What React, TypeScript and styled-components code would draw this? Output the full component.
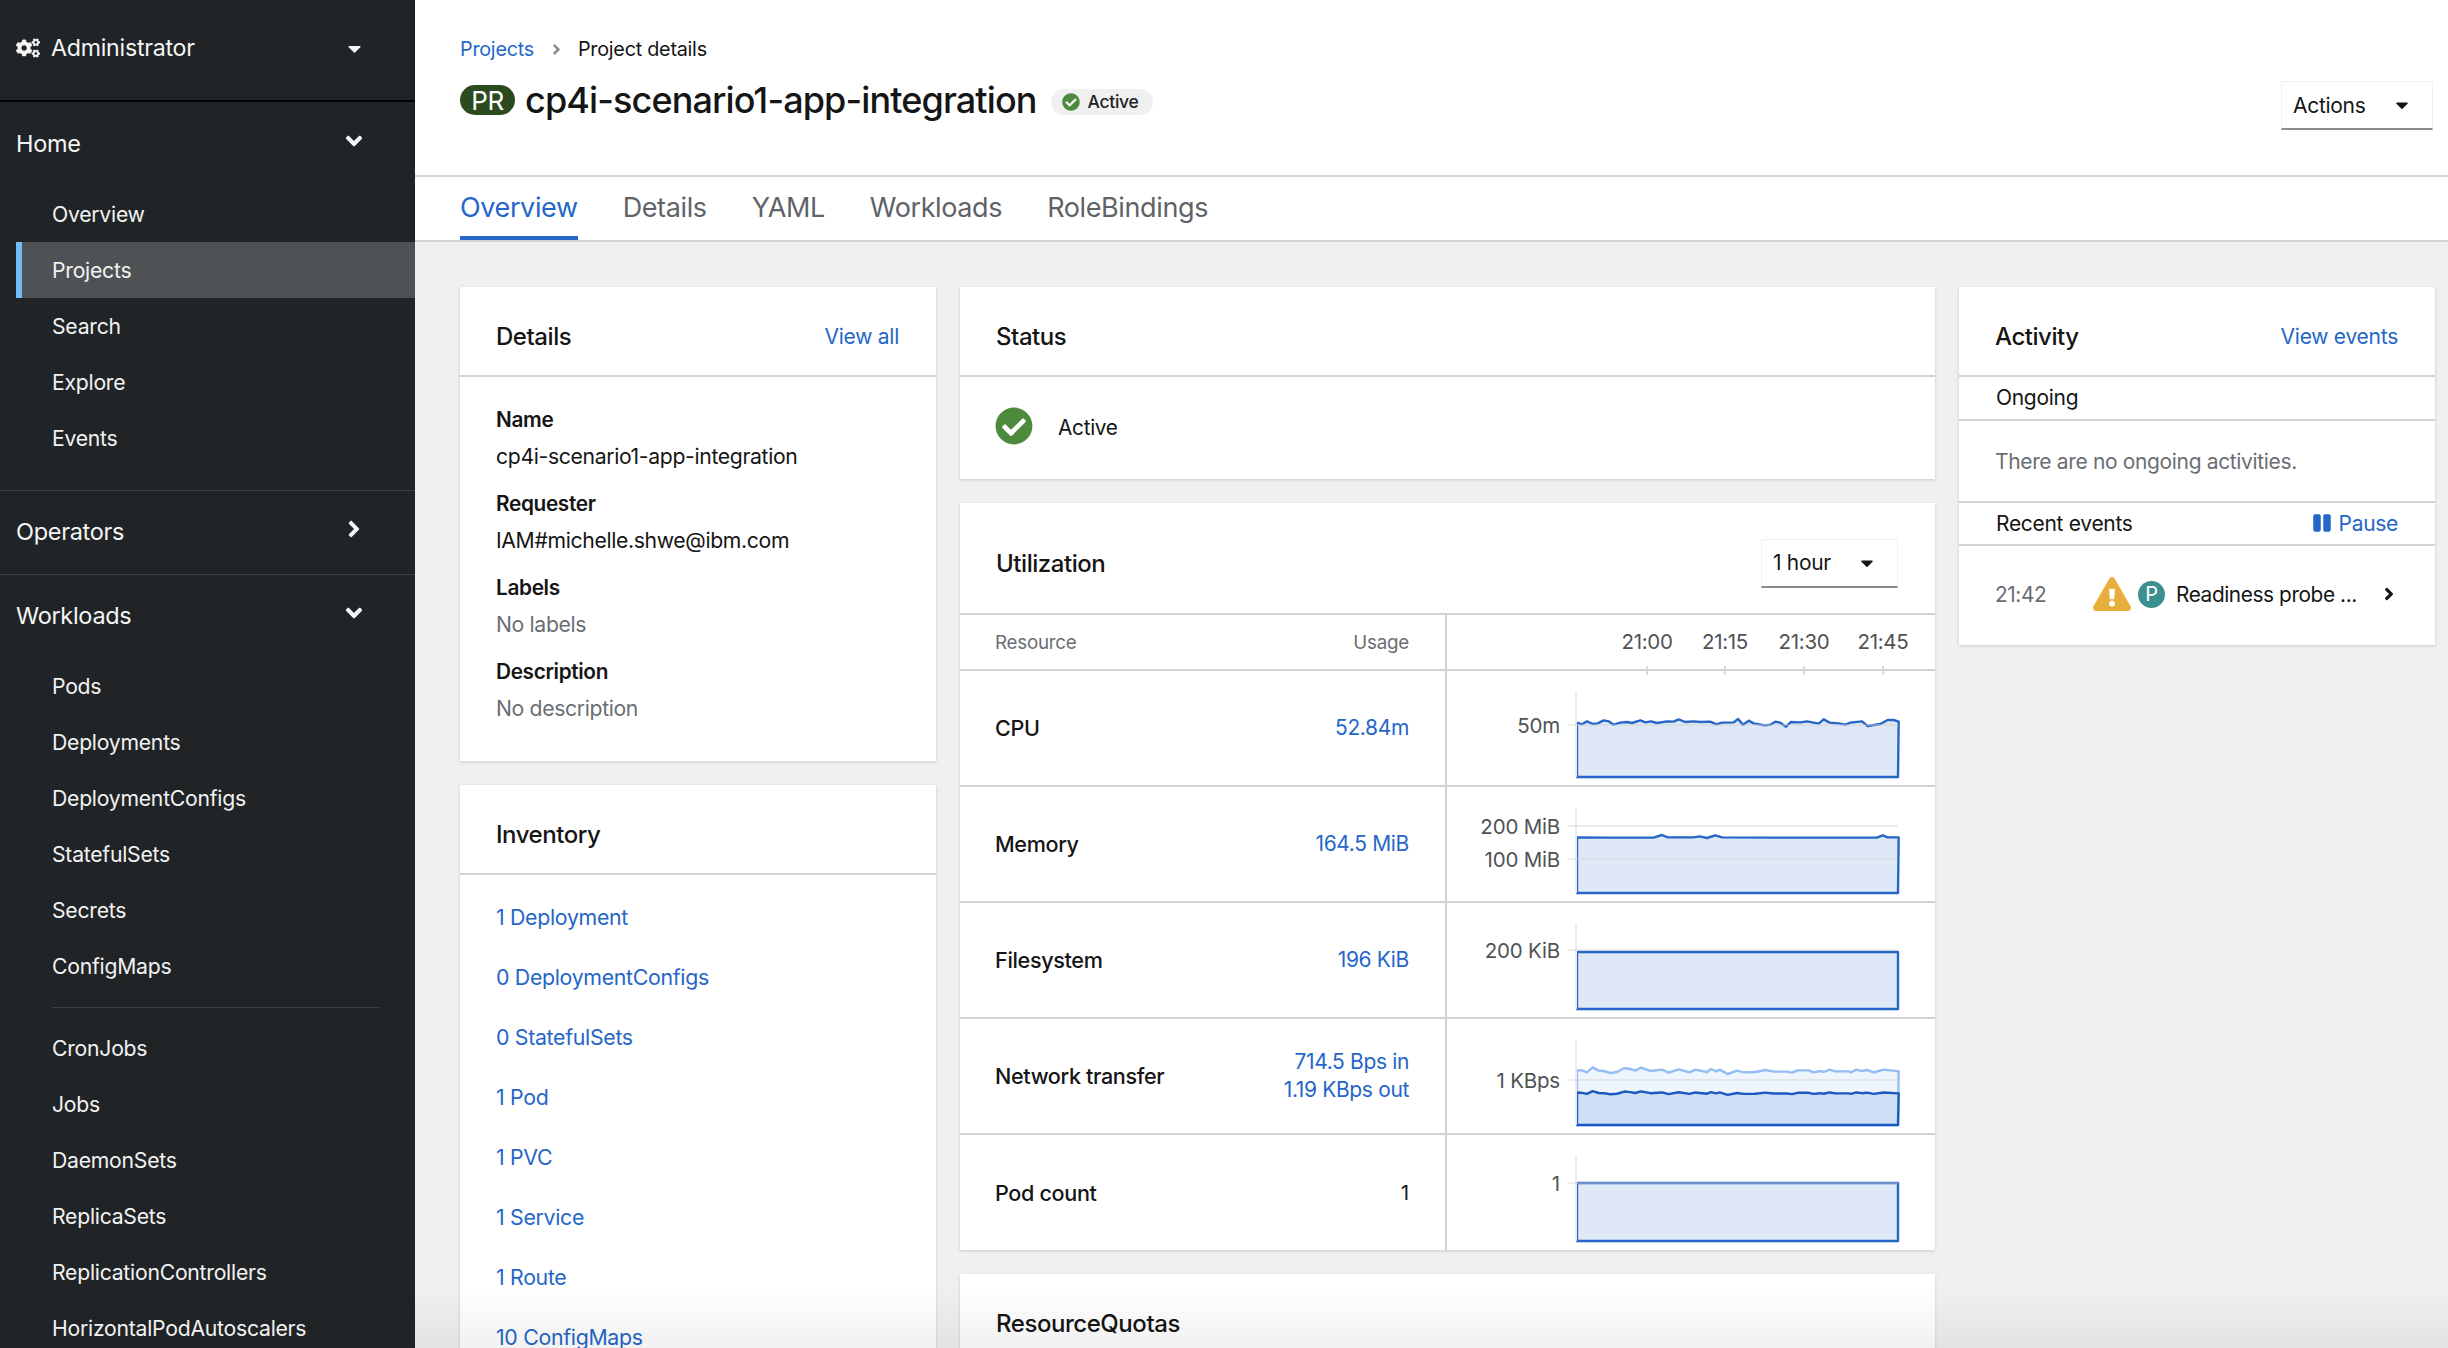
import React from 'react';
import styled, { createGlobalStyle } from 'styled-components';
import { FaAngleDown, FaAngleRight, FaCaretDown, FaCheckCircle, FaCogs, FaExclamationTriangle, FaPause } from 'react-icons/fa';

const Global = createGlobalStyle`
  html, body { margin: 0; padding: 0; height: 100%; overflow: hidden; background: #f0f0f0; }
  body { font-family: "Inter", "Liberation Sans", sans-serif; font-size: 21px; color: #151515; }
  * { box-sizing: border-box; }
`;

const Page = styled.div`display: flex; width: 2448px; height: 1348px; overflow: hidden;`;
const Sidebar = styled.nav`width: 415px; flex: none; height: 1348px; overflow: hidden; background: #212427; color: #fff;`;
const Perspective = styled.div`
  height: 102px; border-bottom: 2px solid #030303; display: flex; align-items: center; padding: 0 50px 4px 16px;
  font-size: 23.2px; letter-spacing: -0.25px; color: #f5f5f5;
  svg { flex: none; }
  span { margin-left: 11px; flex: 1; }
`;
const Section = styled.div<{ $pt: number; $pb: number; $line?: boolean }>`
  padding: ${p => p.$pt}px 0 ${p => p.$pb}px;
  border-bottom: ${p => (p.$line ? '1px solid #3f4245' : 'none')};
`;
const SectionHead = styled.div`
  height: 56px; display: flex; align-items: center; justify-content: space-between; padding: 0 48px 0 16px;
  font-size: 23.5px; letter-spacing: -0.3px; color: #f5f5f5;
  svg { margin-bottom: 5px; }
`;
const SubList = styled.div<{ $mt: number }>`margin-top: ${p => p.$mt}px;`;
const SubItem = styled.div<{ $active?: boolean }>`
  height: 56px; display: flex; align-items: center; margin-left: 16px; padding-left: ${p => (p.$active ? '30px' : '36px')};
  font-size: 21.2px; letter-spacing: -0.25px; color: #f2f2f2;
  background: ${p => (p.$active ? '#4f5255' : 'transparent')};
  border-left: ${p => (p.$active ? '6px solid #73bcf7' : 'none')};
`;
const NavRule = styled.div`height: 1px; background: #3f4245; margin: 13px 36px 12px 52px;`;

const Main = styled.main`flex: 1; min-width: 0; height: 1348px; overflow: hidden; position: relative; background: #f0f0f0;`;
const Header = styled.header`
  height: 177px; background: #fff; border-bottom: 2px solid #d2d2d2; display: flex; justify-content: space-between;
  padding: 0 15px 0 45px;
`;
const Crumbs = styled.div`
  display: flex; align-items: center; height: 28px; margin-top: 35px; font-size: 19.8px; letter-spacing: -0.25px;
  svg { margin: 0 13px 0 14px; color: #8a8d90; }
`;
const Link = styled.a`color: #2566c8; text-decoration: none;`;
const TitleRow = styled.div`display: flex; align-items: center; margin-top: 15px; height: 44px;`;
const Badge = styled.span`
  width: 55px; height: 30px; border-radius: 15px; background: #2c4a20; color: #fff; font-size: 26px; font-weight: 400;
  display: flex; align-items: center; justify-content: center; letter-spacing: -0.4px;
`;
const Title = styled.h1`margin: 0 0 0 10px; font-size: 36px; font-weight: 500; letter-spacing: -0.88px; line-height: 44px; white-space: nowrap;`;
const Pill = styled.span`
  margin: 3px 0 0 14px; width: 102px; height: 26px; border-radius: 13px; background: #f0f0f0; display: flex; align-items: center;
  padding-left: 11px; gap: 8px; font-size: 17.5px; font-weight: 500; letter-spacing: -0.3px; color: #222;
  svg { color: #4c8a3d; }
`;
const Select = styled.div<{ $w: number }>`
  width: ${p => p.$w}px; height: 49px; display: flex; align-items: center; justify-content: space-between; padding: 0 20px 0 11px;
  background: #fff; border: 1px solid #f0f0f0; border-bottom: 2px solid #8a8d90; font-size: 21px; letter-spacing: -0.3px;
`;
const ActionsWrap = styled.div`margin-top: 81px;`;

const Tabs = styled.div`height: 65px; background: #fff; border-bottom: 2px solid #d2d2d2; display: flex; gap: 45px; padding-left: 45px;`;
const Tab = styled.div<{ $active?: boolean }>`
  height: 63px; display: flex; align-items: center; padding-top: 2px; font-size: 27px; letter-spacing: -0.38px;
  color: ${p => (p.$active ? '#2566c8' : '#5f6368')};
  border-bottom: ${p => (p.$active ? '4px solid #2566c8' : '4px solid transparent')};
`;
const Grid = styled.div`
  display: grid; grid-template-columns: 476px 975px 476px; gap: 24px; padding: 45px 13px 0 45px; align-items: start;
`;
const Column = styled.div`display: flex; flex-direction: column; gap: 24px;`;
const Card = styled.section`background: #fff; box-shadow: 0 1px 3px rgba(0, 0, 0, 0.16);`;
const CardHead = styled.div<{ $h?: number }>`
  height: ${p => (p.$h ?? 90)}px; border-bottom: 2px solid #d2d2d2; display: flex; align-items: center; justify-content: space-between;
  padding: 10px 37px 0 36px;
`;
const CardTitle = styled.h2`margin: 0; font-size: 24px; font-weight: 500; letter-spacing: -0.45px;`;
const CardLink = styled(Link)`font-size: 21px; letter-spacing: -0.25px;`;

const Dl = styled.dl`margin: 0; padding: 25px 36px 35px;`;
const Dt = styled.dt`height: 36px; line-height: 36px; font-size: 20.8px; font-weight: 600; letter-spacing: -0.35px;`;
const Dd = styled.dd<{ $muted?: boolean }>`
  margin: 0 0 12px; height: 36px; line-height: 36px; font-size: 21.2px; letter-spacing: -0.35px;
  color: ${p => (p.$muted ? '#6a6e73' : '#151515')};
  &:last-child { margin-bottom: 0; }
`;
const InvList = styled.div`padding: 12px 36px 0;`;
const InvItem = styled(Link)`display: flex; align-items: center; height: 60px; font-size: 21.3px; letter-spacing: -0.3px;`;

const StatusBody = styled.div`
  height: 102px; padding: 0 35px 2px; display: flex; align-items: center; gap: 25px; font-size: 20.8px; letter-spacing: -0.3px;
  svg { color: #4c8a3d; flex: none; margin-bottom: 2px; }
`;
const UtilRow = styled.div<{ $h: number; $last?: boolean }>`
  display: grid; grid-template-columns: 487px 1fr; height: ${p => p.$h}px;
  border-bottom: ${p => (p.$last ? 'none' : '2px solid #d2d2d2')};
`;
const ResCell = styled.div`
  border-right: 2px solid #d2d2d2; padding: 0 36px 0 35px; display: flex; align-items: center; justify-content: space-between;
`;
const HeadText = styled.span`font-size: 18.8px; letter-spacing: -0.25px; color: #6a6e73;`;
const ResName = styled.span`font-size: 21.6px; font-weight: 500; letter-spacing: -0.35px;`;
const ResValue = styled(Link)`font-size: 21px; letter-spacing: -0.35px; text-align: right; line-height: 28px;`;
const PlainValue = styled.span`font-size: 20.5px;`;
const ChartSvg = styled.svg`display: block; overflow: visible; width: 488px;`;

const SubHead = styled.div<{ $h: number }>`
  height: ${p => p.$h}px; border-bottom: 2px solid #d2d2d2; display: flex; align-items: center; justify-content: space-between;
  padding: 0 37px 1px; font-size: 21px; letter-spacing: -0.3px;
`;
const Empty = styled.div`height: 82px; border-bottom: 2px solid #d2d2d2; padding: 0 36px; display: flex; align-items: center; font-size: 21px; letter-spacing: -0.35px; color: #6a6e73;`;
const PauseLink = styled(Link)`display: flex; align-items: center; gap: 7px;`;
const EventRow = styled.div`height: 99px; display: flex; align-items: center; padding: 0 0 3px 36px; font-size: 20.8px; letter-spacing: -0.4px;`;
const EventTime = styled.span`width: 98px; color: #6a6e73;`;
const Warn = styled.span`color: #e8ae3c; display: flex;`;
const PBadge = styled.span`
  width: 27px; height: 27px; border-radius: 50%; background: #3d9090; color: #fff; font-size: 20px; margin: 0 11px 0 7px;
  display: flex; align-items: center; justify-content: center;
`;
const EventText = styled.span`width: 203px; white-space: nowrap;`;
const Fade = styled.div`
  position: absolute; left: 0; right: 0; bottom: 0; height: 62px; pointer-events: none;
  background: linear-gradient(to bottom, rgba(0, 0, 0, 0), rgba(0, 0, 0, 0.055));
`;

type Pt = [number, number];
const BLUE = '#2566c8';
const conv = (pts: Pt[], base: number, top: number): string =>
  pts.map(([x, y]) => `${(x - 410) / 3 + 130},${y / 3 + base - top}`).join(' ');
const area = (line: string, bottom: number) => `130,${bottom} ${line} 451,${bottom}`;

const cpu: Pt[] = [[410,308],[425,313],[440,304],[458,312],[472,310],[490,301],[505,304],[520,314],[540,308],[560,306],[575,309],[600,301],[615,307],[632,304],[650,309],[680,304],[700,305],[715,298],[735,306],[760,304],[780,306],[810,305],[828,313],[845,308],[880,307],[893,297],[908,314],[925,302],[940,310],[975,316],[990,314],[1005,305],[1020,308],[1037,320],[1052,306],[1080,307],[1100,304],[1135,311],[1150,298],[1168,308],[1195,310],[1215,314],[1230,308],[1265,304],[1282,318],[1320,312],[1342,300],[1360,300],[1375,305]];
const mem: Pt[] = [[410,652],[500,653],[640,653],[665,645],[682,652],[760,652],[778,649],[800,654],[825,646],[845,652],[1000,653],[1310,653],[1327,646],[1342,652],[1375,652]];
const netLight: Pt[] = [[410,511],[425,511],[440,517],[457,502],[475,512],[490,513],[510,519],[530,516],[552,504],[570,507],[585,512],[602,503],[630,513],[665,509],[685,518],[715,508],[748,517],[765,509],[800,516],[812,507],[828,514],[838,509],[862,522],[890,512],[910,517],[945,516],[975,510],[1000,515],[1040,515],[1055,518],[1072,511],[1105,511],[1120,517],[1140,513],[1150,516],[1168,509],[1185,514],[1225,514],[1232,517],[1248,509],[1265,513],[1280,510],[1300,517],[1330,509],[1375,514]];
const netDark: Pt[] = netLight.map(([x, y]) => [x, 579 + (y - 512) * 0.55]);

const Axis: React.FC<{ ticks: { y: number; label: string }[] }> = ({ ticks }) => (
  <>
    <line x1={129} x2={129} y1={21} y2={106} stroke="#ececec" strokeWidth={2} />
    {ticks.map(t => (
      <g key={t.label}>
        <line x1={121} x2={451} y1={t.y} y2={t.y} stroke="#d2d2d2" strokeOpacity={0.55} strokeWidth={1.5} />
        <text x={113} y={t.y + 8} textAnchor="end" fontSize={20.5} letterSpacing={-0.2} fill="#4f5255" fontFamily="Inter, sans-serif">{t.label}</text>
      </g>
    ))}
  </>
);

const Chart: React.FC<{ ticks: { y: number; label: string }[]; children: React.ReactNode }> = ({ ticks, children }) => (
  <ChartSvg height={114} viewBox="0 0 488 114">
    {children}
    <Axis ticks={ticks} />
  </ChartSvg>
);
const Area: React.FC<{ points: string; fill: string; stroke: string }> = ({ points, fill, stroke }) => (
  <polygon points={points} fill={fill} stroke={stroke} strokeWidth={2.4} strokeLinejoin="round" />
);

const cpuLine = conv(cpu, 620, 671);
const memLine = conv(mem, 620, 787);
const lightLine = conv(netLight, 900, 1019);
const darkLine = conv(netDark, 900, 1019);

const workloadsA = ['Pods', 'Deployments', 'DeploymentConfigs', 'StatefulSets', 'Secrets', 'ConfigMaps'];
const workloadsB = ['CronJobs', 'Jobs', 'DaemonSets', 'ReplicaSets', 'ReplicationControllers', 'HorizontalPodAutoscalers'];
const inventory = ['1 Deployment', '0 DeploymentConfigs', '0 StatefulSets', '1 Pod', '1 PVC', '1 Service', '1 Route', '10 ConfigMaps'];
const times: [number, string][] = [[200, '21:00'], [278, '21:15'], [357, '21:30'], [436, '21:45']];

export default function App() {
  return (
    <Page>
      <Global />
      <Sidebar>
        <Perspective>
          <FaCogs size={24} />
          <span>Administrator</span>
          <FaCaretDown size={21} />
        </Perspective>
        <Section $pt={13} $pb={24} $line>
          <SectionHead>Home<FaAngleDown size={26} /></SectionHead>
          <SubList $mt={15}>
            <SubItem>Overview</SubItem>
            <SubItem $active>Projects</SubItem>
            <SubItem>Search</SubItem>
            <SubItem>Explore</SubItem>
            <SubItem>Events</SubItem>
          </SubList>
        </Section>
        <Section $pt={12} $pb={15} $line>
          <SectionHead>Operators<FaAngleRight size={26} /></SectionHead>
        </Section>
        <Section $pt={12} $pb={0}>
          <SectionHead>Workloads<FaAngleDown size={26} /></SectionHead>
          <SubList $mt={15}>
            {workloadsA.map(n => <SubItem key={n}>{n}</SubItem>)}
            <NavRule />
            {workloadsB.map(n => <SubItem key={n}>{n}</SubItem>)}
          </SubList>
        </Section>
      </Sidebar>
      <Main>
        <Header>
          <div>
            <Crumbs><Link>Projects</Link><FaAngleRight size={17} />Project details</Crumbs>
            <TitleRow>
              <Badge>PR</Badge>
              <Title>cp4i-scenario1-app-integration</Title>
              <Pill><FaCheckCircle size={18} />Active</Pill>
            </TitleRow>
          </div>
          <ActionsWrap>
            <Select $w={152}>Actions<FaCaretDown size={20} /></Select>
          </ActionsWrap>
        </Header>
        <Tabs>
          <Tab $active>Overview</Tab>
          <Tab>Details</Tab>
          <Tab>YAML</Tab>
          <Tab>Workloads</Tab>
          <Tab>RoleBindings</Tab>
        </Tabs>
        <Grid>
          <Column>
            <Card>
              <CardHead><CardTitle>Details</CardTitle><CardLink>View all</CardLink></CardHead>
              <Dl>
                <Dt>Name</Dt><Dd>cp4i-scenario1-app-integration</Dd>
                <Dt>Requester</Dt><Dd>IAM#michelle.shwe@ibm.com</Dd>
                <Dt>Labels</Dt><Dd $muted>No labels</Dd>
                <Dt>Description</Dt><Dd $muted>No description</Dd>
              </Dl>
            </Card>
            <Card>
              <CardHead><CardTitle>Inventory</CardTitle></CardHead>
              <InvList>
                {inventory.map(n => <InvItem key={n}>{n}</InvItem>)}
              </InvList>
            </Card>
          </Column>
          <Column>
            <Card>
              <CardHead><CardTitle>Status</CardTitle></CardHead>
              <StatusBody><FaCheckCircle size={38} />Active</StatusBody>
            </Card>
            <Card>
              <CardHead $h={112}>
                <CardTitle>Utilization</CardTitle>
                <Select $w={137}>1 hour<FaCaretDown size={20} /></Select>
              </CardHead>
              <UtilRow $h={56}>
                <ResCell><HeadText>Resource</HeadText><HeadText>Usage</HeadText></ResCell>
                <ChartSvg height={54} viewBox="0 0 488 54">
                  {times.map(([x, label]) => (
                    <g key={label}>
                      <text x={x} y={34} textAnchor="middle" fontSize={20.5} letterSpacing={-0.3} fill="#4f5255" fontFamily="Inter, sans-serif">{label}</text>
                      <line x1={x} x2={x} y1={51} y2={60} stroke="#d2d2d2" strokeWidth={1.5} />
                    </g>
                  ))}
                </ChartSvg>
              </UtilRow>
              <UtilRow $h={116}>
                <ResCell><ResName>CPU</ResName><ResValue>52.84m</ResValue></ResCell>
                <Chart ticks={[{ y: 54, label: '50m' }]}>
                  <Area points={area(cpuLine, 106)} fill="#dfe8f6" stroke={BLUE} />
                </Chart>
              </UtilRow>
              <UtilRow $h={116}>
                <ResCell><ResName>Memory</ResName><ResValue>164.5 MiB</ResValue></ResCell>
                <Chart ticks={[{ y: 39, label: '200 MiB' }, { y: 72, label: '100 MiB' }]}>
                  <Area points={area(memLine, 106)} fill="#dfe8f6" stroke={BLUE} />
                </Chart>
              </UtilRow>
              <UtilRow $h={116}>
                <ResCell><ResName>Filesystem</ResName><ResValue>196 KiB</ResValue></ResCell>
                <Chart ticks={[{ y: 47, label: '200 KiB' }]}>
                  <Area points="130,106 130,49 451,49 451,106" fill="#dfe8f6" stroke={BLUE} />
                </Chart>
              </UtilRow>
              <UtilRow $h={116}>
                <ResCell>
                  <ResName>Network transfer</ResName>
                  <ResValue>714.5 Bps in<br />1.19 KBps out</ResValue>
                </ResCell>
                <Chart ticks={[{ y: 61, label: '1 KBps' }]}>
                  <Area points={area(lightLine, 106)} fill="#eef5fd" stroke="#93bdf3" />
                  <Area points={area(darkLine, 106)} fill="#cfdff5" stroke="#1b58bf" />
                </Chart>
              </UtilRow>
              <UtilRow $h={115} $last>
                <ResCell><ResName>Pod count</ResName><PlainValue>1</PlainValue></ResCell>
                <Chart ticks={[{ y: 48, label: '1' }]}>
                  <Area points="130,106 130,48 451,48 451,106" fill="#dfe8f6" stroke={BLUE} />
                </Chart>
              </UtilRow>
            </Card>
            <Card>
              <CardHead><CardTitle>ResourceQuotas</CardTitle></CardHead>
            </Card>
          </Column>
          <Column>
            <Card>
              <CardHead><CardTitle>Activity</CardTitle><CardLink>View events</CardLink></CardHead>
              <SubHead $h={44}>Ongoing</SubHead>
              <Empty>There are no ongoing activities.</Empty>
              <SubHead $h={43}>Recent events<PauseLink><FaPause size={20} />Pause</PauseLink></SubHead>
              <EventRow>
                <EventTime>21:42</EventTime>
                <Warn><FaExclamationTriangle size={38} /></Warn>
                <PBadge>P</PBadge>
                <EventText>Readiness probe ...</EventText>
                <FaAngleRight size={20} />
              </EventRow>
            </Card>
          </Column>
        </Grid>
        <Fade />
      </Main>
    </Page>
  );
}
